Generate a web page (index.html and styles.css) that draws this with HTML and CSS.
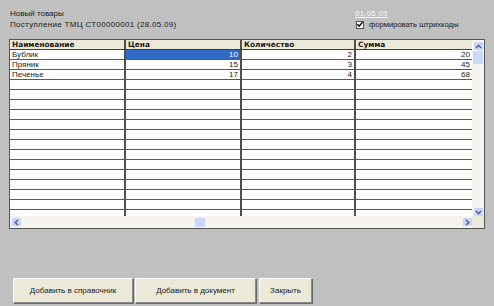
FILE: index.html
```html
<!DOCTYPE html>
<html lang="ru">
<head>
<meta charset="utf-8">
<title>Новый товары</title>
<link rel="stylesheet" href="styles.css">
</head>
<body>
<div class="window">
  <div class="top">
    <div class="titles">
      <div class="line">Новый товары</div>
      <div class="line">Поступление ТМЦ СТ00000001 (28.05.09)</div>
    </div>
    <div class="options">
      <div class="line"><span class="date">01.05.09</span></div>
      <div class="check-row">
        <span class="checkbox"><svg width="7" height="7" viewBox="0 0 7 7"><path d="M0.5 3.2 L2.5 5.5 L6.5 0.8" fill="none" stroke="#000" stroke-width="1.6"/></svg></span>
        <span class="check-label">формировать штрихкоды</span>
      </div>
    </div>
  </div>

  <div class="frame">
    <div class="table">
      <div class="row head">
        <div class="cell">Наименование</div>
        <div class="cell">Цена</div>
        <div class="cell">Количество</div>
        <div class="cell">Сумма</div>
      </div>
      <div class="row">
        <div class="cell">Бублик</div>
        <div class="cell num selected">10</div>
        <div class="cell num">2</div>
        <div class="cell num">20</div>
      </div>
      <div class="row">
        <div class="cell">Пряник</div>
        <div class="cell num">15</div>
        <div class="cell num">3</div>
        <div class="cell num">45</div>
      </div>
      <div class="row">
        <div class="cell">Печенье</div>
        <div class="cell num">17</div>
        <div class="cell num">4</div>
        <div class="cell num">68</div>
      </div>
      <div class="row"><div class="cell"></div><div class="cell"></div><div class="cell"></div><div class="cell"></div></div>
      <div class="row"><div class="cell"></div><div class="cell"></div><div class="cell"></div><div class="cell"></div></div>
      <div class="row"><div class="cell"></div><div class="cell"></div><div class="cell"></div><div class="cell"></div></div>
      <div class="row"><div class="cell"></div><div class="cell"></div><div class="cell"></div><div class="cell"></div></div>
      <div class="row"><div class="cell"></div><div class="cell"></div><div class="cell"></div><div class="cell"></div></div>
      <div class="row"><div class="cell"></div><div class="cell"></div><div class="cell"></div><div class="cell"></div></div>
      <div class="row"><div class="cell"></div><div class="cell"></div><div class="cell"></div><div class="cell"></div></div>
      <div class="row"><div class="cell"></div><div class="cell"></div><div class="cell"></div><div class="cell"></div></div>
      <div class="row"><div class="cell"></div><div class="cell"></div><div class="cell"></div><div class="cell"></div></div>
      <div class="row"><div class="cell"></div><div class="cell"></div><div class="cell"></div><div class="cell"></div></div>
      <div class="row"><div class="cell"></div><div class="cell"></div><div class="cell"></div><div class="cell"></div></div>
      <div class="row"><div class="cell"></div><div class="cell"></div><div class="cell"></div><div class="cell"></div></div>
      <div class="row"><div class="cell"></div><div class="cell"></div><div class="cell"></div><div class="cell"></div></div>
      <div class="row"><div class="cell"></div><div class="cell"></div><div class="cell"></div><div class="cell"></div></div>
    </div>
    <div class="vscroll">
      <span class="sbtn"><svg width="7" height="5" viewBox="0 0 7 5"><path d="M1 4 L3.5 1.2 L6 4" fill="none" stroke="#4d6185" stroke-width="1.4"/></svg></span>
      <span class="vthumb"></span>
      <span class="vspace"></span>
      <span class="sbtn"><svg width="7" height="5" viewBox="0 0 7 5"><path d="M1 1 L3.5 3.8 L6 1" fill="none" stroke="#4d6185" stroke-width="1.4"/></svg></span>
    </div>
    <div class="hscroll">
      <span class="sbtn"><svg width="5" height="7" viewBox="0 0 5 7"><path d="M4 1 L1.2 3.5 L4 6" fill="none" stroke="#4d6185" stroke-width="1.4"/></svg></span>
      <span class="hthumb"></span>
      <span class="hspace"></span>
      <span class="sbtn"><svg width="5" height="7" viewBox="0 0 5 7"><path d="M1 1 L3.8 3.5 L1 6" fill="none" stroke="#4d6185" stroke-width="1.4"/></svg></span>
    </div>
    <div class="corner"></div>
  </div>

  <div class="buttons">
    <button class="btn btn-wide">Добавить в справочник</button>
    <button class="btn btn-wide2">Добавить в документ</button>
    <button class="btn btn-small">Закрыть</button>
  </div>
</div>
</body>
</html>
```

FILE: styles.css
```css
html, body {
  margin: 0;
  padding: 0;
  background: #c0c0c0;
}
body {
  font-family: "Liberation Sans", Arial, sans-serif;
  font-size: 8px;
  color: #1a1a1a;
}
.window {
  width: 494px;
  height: 306px;
  display: flex;
  flex-direction: column;
  overflow: hidden;
}
.top {
  display: flex;
  justify-content: space-between;
  padding: 8px 0 0 10px;
  height: 31px;
  box-sizing: border-box;
}
.titles .line:last-child {
  letter-spacing: 0.3px;
}
.line {
  line-height: 11px;
  height: 11px;
  white-space: nowrap;
}
.options {
  width: 139px;
  display: flex;
  flex-direction: column;
}
.date {
  color: #f6f6fa;
  text-decoration: underline;
  letter-spacing: 0.2px;
}
.check-row {
  display: flex;
  align-items: center;
  height: 11px;
  padding-left: 1px;
}
.checkbox {
  width: 6px;
  height: 6px;
  border: 1px solid #555;
  background: #fff;
  display: flex;
  align-items: center;
  justify-content: center;
  margin-right: 5px;
}
.checkbox svg { display: block; }
.check-label {
  white-space: nowrap;
  font-size: 7.6px;
}

.frame {
  margin: 8px 0 0 9px;
  width: 476px;
  height: 190px;
  box-sizing: border-box;
  border: 1px solid #555;
  display: grid;
  grid-template-columns: 462px 12px;
  grid-template-rows: 176px 12px;
  background: #fff;
}
.table {
  overflow: hidden;
  background: #fff;
}
.row {
  display: grid;
  grid-template-columns: 116px 116px 114px 116px;
  height: 10px;
}
.cell {
  box-sizing: border-box;
  height: 10px;
  border-right: 2px solid #4f4f4f;
  border-bottom: 1px solid #5a5a5a;
  padding: 0 2px;
  line-height: 9px;
  white-space: nowrap;
  overflow: hidden;
}
.cell:last-child {
  border-right: none;
}
.head .cell {
  background: #ece9d8;
  font-family: "DejaVu Sans", "Liberation Sans", sans-serif;
  font-size: 7.4px;
  font-weight: bold;
  border-bottom: 1px solid #3c3c3c;
}
.num { text-align: right; }
.selected {
  background: #316ac5;
  color: #fff;
}
.vscroll {
  background: #f5f4ee;
  display: flex;
  flex-direction: column;
  align-items: center;
  padding: 2px 0 0;
}
.hscroll {
  background: #f5f4ee;
  display: flex;
  align-items: center;
  padding: 0 0 0 2px;
}
.sbtn {
  width: 9px;
  height: 8px;
  background: #c6d6fb;
  border-radius: 1px;
  display: flex;
  align-items: center;
  justify-content: center;
  flex: none;
}
.vthumb {
  width: 10px;
  height: 13px;
  background: #cad9fa;
  margin-top: 1px;
}
.vspace { flex: 1; }
.hspace { flex: 1; }
.hthumb {
  width: 10px;
  height: 9px;
  background: #cad9fa;
  margin-left: 174px;
  flex: none;
}
.corner { background: #ece9d8; }

.buttons {
  display: flex;
  padding: 49px 0 0 13px;
  gap: 2px;
}
.btn {
  font-family: "Liberation Sans", Arial, sans-serif;
  font-size: 8px;
  color: #1a1a1a;
  height: 25px;
  background: #ece9d8;
  border: none;
  border-top: 1px solid #fff;
  border-left: 1px solid #fff;
  border-right: 1px solid #8a8a8a;
  border-bottom: 1px solid #8a8a8a;
  box-shadow: 1px 1px 0 #6a6a6a;
  padding: 0;
  margin: 0;
}
.btn-wide { width: 120px; }
.btn-wide2 { width: 121px; }
.btn-small { width: 53px; margin-left: 1px; }
```
